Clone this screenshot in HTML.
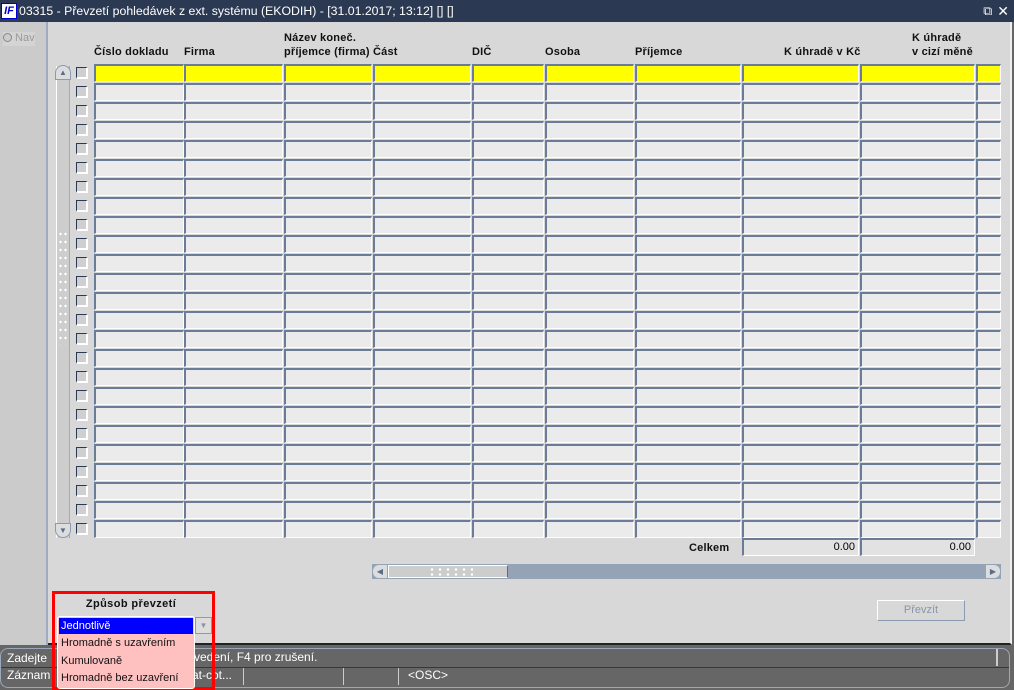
<!DOCTYPE html>
<html><head><meta charset="utf-8"><style>
*{margin:0;padding:0;box-sizing:border-box}
body{width:1014px;height:690px;overflow:hidden;background:#666;font-family:"Liberation Sans",sans-serif;font-size:11px;position:relative}
.a{position:absolute}
.title{left:0;top:0;width:1014px;height:22px;background:#2b3a52;color:#fff;font-size:12.3px;line-height:22px}
.main{left:0;top:22px;width:1012px;height:623px;background:#d8d8d8;border-right:2px solid #eee;border-bottom:2px solid #222}
.left{left:0;top:22px;width:48px;height:623px;background:#cbcbcb;border-right:2px solid #a0acbe}
.h{font-weight:bold;color:#111;font-size:11px;line-height:14px;letter-spacing:0.2px}
.c{position:absolute;height:18px;background:#ebebeb;border-top:2px solid #6a7c98;border-left:2px solid #6a7c98;border-bottom:1px solid #fff;border-right:1px solid #fff}
.y{background:#ffff00}
.cb{position:absolute;left:76px;width:12px;height:12px;background:#cfcfcf;border-top:1px solid #2b3a52;border-left:1px solid #2b3a52;border-right:2px solid #fff;border-bottom:2px solid #fff}
.st{color:#fff;font-size:12px}
</style></head><body>
<div class="a title"><span style="display:inline-block;width:16px;height:16px;background:#fff;border:1px solid #00c;color:#00c;font-weight:bold;font-style:italic;font-size:11px;line-height:14px;text-align:center;margin:3px 2px 0 1px;vertical-align:top">IF</span>03315 - Převzetí pohledávek z ext. systému (EKODIH) - [31.01.2017; 13:12] [] []<span style="position:absolute;right:22px;top:0">&#x29C9;</span><span style="position:absolute;right:5px;top:0;font-size:14px">✕</span></div>
<div class="a main"></div>
<div class="a left"></div>
<div class="a" style="left:3px;top:32px;color:#999;font-size:11px;background:#d4d4d4;width:32px;height:14px"><span style="display:inline-block;width:9px;height:9px;border-radius:50%;background:#ccc;border:1px solid #888;vertical-align:-1px"></span> Nav</div>

<div class="a h" style="left:94px;top:45px">Číslo dokladu</div>
<div class="a h" style="left:184px;top:45px">Firma</div>
<div class="a h" style="left:284px;top:31px">Název koneč.<br>příjemce (firma)</div>
<div class="a h" style="left:373px;top:45px">Část</div>
<div class="a h" style="left:472px;top:45px">DIČ</div>
<div class="a h" style="left:545px;top:45px">Osoba</div>
<div class="a h" style="left:635px;top:45px">Příjemce</div>
<div class="a h" style="left:784px;top:45px">K úhradě v Kč</div>
<div class="a h" style="left:912px;top:31px">K úhradě<br>v cizí měně</div>

<div class="a" style="left:56px;top:66px;width:14px;height:472px;background:#cdcdcd;border-left:1px solid #fff;border-right:1px solid #a0acbe"></div>
<div class="a" style="left:55px;top:65px;width:16px;height:15px;border:1px solid #8a9ab0;border-radius:8px 8px 0 0;background:#ddd;color:#5a6e8c;font-size:8px;text-align:center;line-height:14px">▲</div>
<div class="a" style="left:55px;top:523px;width:16px;height:15px;border:1px solid #8a9ab0;border-radius:0 0 8px 8px;background:#ddd;color:#5a6e8c;font-size:8px;text-align:center;line-height:14px">▼</div>
<div class="a" style="left:58px;top:230px;width:10px;height:115px;background:radial-gradient(circle,#fff 1px,transparent 1.5px) 0 0/5px 8px"></div>

<div id="g"></div>

<div class="a h" style="left:689px;top:541px">Celkem</div>
<div class="c" style="left:742px;top:538px;width:117px;text-align:right;padding-right:3px;line-height:15px;background:#e2e2e2">0.00</div>
<div class="c" style="left:860px;top:538px;width:115px;text-align:right;padding-right:3px;line-height:15px;background:#e2e2e2">0.00</div>

<div class="a" style="left:372px;top:564px;width:629px;height:15px;background:#94a3b6"></div>
<div class="a" style="left:373px;top:565px;width:14px;height:13px;background:#ddd;border-radius:6px 0 0 6px;color:#5a6e8c;font-size:8px;line-height:13px;text-align:center">◀</div>
<div class="a" style="left:388px;top:565px;width:120px;height:13px;background:#cdcdcd;border:1px solid #fff;border-right-color:#5a6e8c"></div>
<div class="a" style="left:428px;top:567px;width:45px;height:9px;background:radial-gradient(circle,#fff 1px,transparent 1.5px) 0 0/8px 5px"></div>
<div class="a" style="left:986px;top:565px;width:14px;height:13px;background:#ddd;border-radius:0 6px 6px 0;color:#5a6e8c;font-size:8px;line-height:13px;text-align:center">▶</div>

<div class="a" style="left:877px;top:600px;width:88px;height:21px;border:1px solid #fff;border-right-color:#8a9ab0;border-bottom-color:#8a9ab0;color:#8a96a6;text-align:center;line-height:19px;font-size:11px">Převzít</div>

<div class="a st" style="left:0;top:648px;width:1010px;height:20px;border:1px solid #9aa8bb;border-radius:8px 8px 0 0;border-bottom:1px solid #2b3a52;padding:2px 6px">Zadejte</div>
<div class="a st" style="left:194px;top:650px">vedení, F4 pro zrušení.</div>
<div class="a" style="left:996px;top:649px;width:2px;height:17px;background:#ccc"></div>
<div class="a st" style="left:0;top:667px;width:1010px;height:21px;border:1px solid #9aa8bb;border-top:none;border-radius:0 0 8px 8px;padding:1px 6px">Záznam</div>
<div class="a st" style="left:192px;top:668px">at-cot...</div>
<div class="a" style="left:243px;top:668px;width:1px;height:17px;background:#ccc"></div>
<div class="a" style="left:343px;top:668px;width:1px;height:17px;background:#ccc"></div>
<div class="a" style="left:398px;top:668px;width:1px;height:17px;background:#ccc"></div>
<div class="a st" style="left:408px;top:668px">&lt;OSC&gt;</div>

<div class="a" style="left:52px;top:591px;width:163px;height:99px;border:3px solid #f00"></div>
<div class="a h" style="left:55px;top:597px;width:152px;text-align:center;letter-spacing:0.4px">Způsob převzetí</div>
<div class="a" style="left:195px;top:617px;width:17px;height:17px;border:1px solid #8a9ab0;background:#ddd;color:#8a96a6;font-size:8px;text-align:center;line-height:15px">▼</div>
<div class="a" style="left:57px;top:616px;width:138px;height:73px;background:#ffc0c0;border:1px solid #fff;border-radius:3px;font-size:11px;line-height:17.5px;color:#111">
<div style="background:#0000ff;color:#fff;margin:1px;padding-left:2px;line-height:16px">Jednotlivě</div>
<div style="padding-left:3px">Hromadně s uzavřením</div>
<div style="padding-left:3px">Kumulovaně</div>
<div style="padding-left:3px">Hromadně bez uzavření</div>
</div>

<script>
var cols=[[94,90],[184,99],[284,88],[373,98],[472,72],[545,89],[635,106],[742,117],[860,115],[976,25]];
var h='';
for(var r=0;r<25;r++){var t=64+r*19;
h+='<div class="cb" style="top:'+(t+3)+'px"></div>';
for(var i=0;i<cols.length;i++)h+='<div class="c'+(r==0?' y':'')+'" style="left:'+cols[i][0]+'px;top:'+t+'px;width:'+cols[i][1]+'px"></div>';}
document.getElementById('g').innerHTML=h;
</script>
</body></html>
